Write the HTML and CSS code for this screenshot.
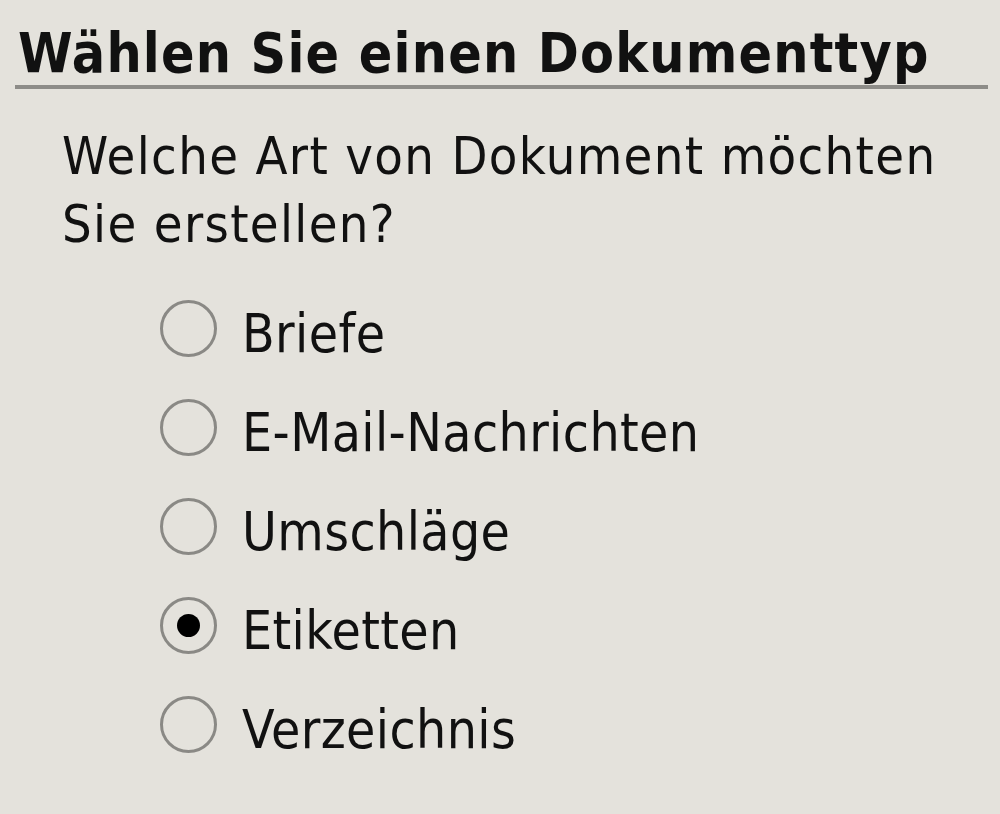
FILE: index.html
```html
<!DOCTYPE html>
<html lang="de">
<head>
    <meta charset="UTF-8">
    <meta name="viewport" content="width=device-width, initial-scale=1.0">
    <title>Seriendruck</title>
    <link rel="stylesheet" href="styles.css">
</head>
<body>
<div class="panel">
    <h1 class="title">Wählen Sie einen Dokumenttyp</h1>
    <p class="question">Welche Art von Dokument möchten<br>Sie erstellen?</p>
    <div class="options">
        <label class="option"><span class="radio"></span>Briefe</label>
        <label class="option"><span class="radio"></span>E-Mail-Nachrichten</label>
        <label class="option"><span class="radio"></span>Umschläge</label>
        <label class="option"><span class="radio checked"></span>Etiketten</label>
        <label class="option"><span class="radio"></span>Verzeichnis</label>
    </div>
</div>
</body>
</html>
```

FILE: styles.css
```css
html, body {
    margin: 0;
    height: 100%;
    background: #e4e2dc;
}
body {
    font-family: "DejaVu Sans Condensed", "DejaVu Sans", sans-serif;
    color: #111;
}
.panel {
    padding: 22px 12px 0 15px;
}
.title {
    margin: 0;
    padding: 0 0 1px 3px;
    font-size: 55px;
    font-weight: bold;
    letter-spacing: 1.2px;
    line-height: 62px;
    border-bottom: 4px solid #8d8c88;
}
.question {
    margin: 33px 0 0 47px;
    font-size: 52px;
    letter-spacing: 1.35px;
    line-height: 68px;
}
.options {
    display: flex;
    flex-direction: column;
    gap: 37px;
    margin: 45px 0 0 145px;
}
.option {
    display: flex;
    align-items: center;
    gap: 25px;
    font-size: 53px;
    letter-spacing: 0.4px;
    line-height: 62px;
}
.radio {
    width: 51px;
    height: 51px;
    margin-top: -12px;
    border: 3px solid #8a8985;
    border-radius: 50%;
    display: flex;
    align-items: center;
    justify-content: center;
}
.radio.checked::after {
    content: "";
    width: 23px;
    height: 23px;
    border-radius: 50%;
    background: #000;
}
```
